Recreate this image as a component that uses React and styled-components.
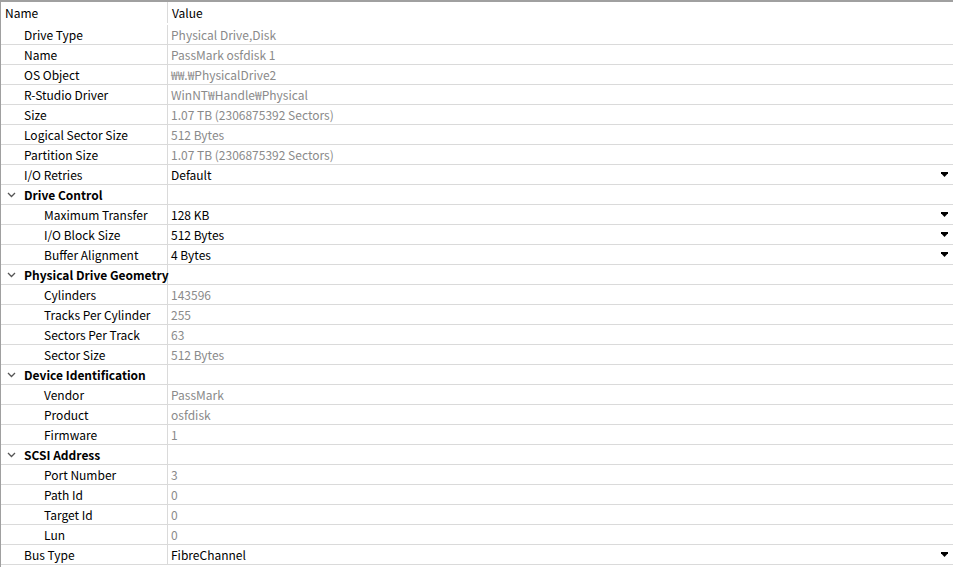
import styled, { createGlobalStyle } from 'styled-components';

const Global = createGlobalStyle`
    html, body {
        margin: 0;
        padding: 0;
        background: #fff;
        overflow: hidden;
    }
    body {
        font-family: "Noto Sans CJK KR", "Noto Sans", sans-serif;
        font-size: 12px;
    }
`;

const Grid = styled.div`
    width: 953px;
    height: 567px;
    box-sizing: border-box;
    border-top: 2px solid #a0a0a0;
    border-left: 1px solid #a0a0a0;
    background: #fff;
    overflow: hidden;
`;

const Row = styled.div`
    display: grid;
    grid-template-columns: 167px 1fr;
    height: ${(p) => (p.$header ? '23px' : '20px')};
    box-sizing: border-box;
    padding-bottom: ${(p) => (p.$header ? '2px' : '0')};
    border-bottom: ${(p) => (p.$header ? 'none' : '1px solid #dadada')};
`;

const NameCell = styled.div`
    display: flex;
    align-items: center;
    box-sizing: border-box;
    border-right: 1px solid #dadada;
    padding-left: ${(p) => p.$indent}px;
    color: #000;
    font-weight: ${(p) => (p.$group ? 700 : 400)};
    white-space: nowrap;
    overflow: visible;
    position: relative;
`;

const ValueCell = styled.div`
    display: flex;
    align-items: center;
    justify-content: space-between;
    padding-left: ${(p) => (p.$header ? 4 : 3)}px;
    padding-right: 5px;
    color: ${(p) => (p.$muted ? '#8a8a8a' : '#000')};
    white-space: nowrap;
`;

const Chevron = styled.svg`
    position: absolute;
    left: 6px;
    top: 7px;
`;

const Arrow = styled.svg`
    display: block;
`;

const rows = [
    { n: 'Drive Type', v: 'Physical Drive,Disk' },
    { n: 'Name', v: 'PassMark osfdisk 1' },
    { n: 'OS Object', v: '₩₩.₩PhysicalDrive2' },
    { n: 'R-Studio Driver', v: 'WinNT₩Handle₩Physical' },
    { n: 'Size', v: '1.07 TB (2306875392 Sectors)' },
    { n: 'Logical Sector Size', v: '512 Bytes' },
    { n: 'Partition Size', v: '1.07 TB (2306875392 Sectors)' },
    { n: 'I/O Retries', v: 'Default', edit: true },
    { n: 'Drive Control', group: true },
    { n: 'Maximum Transfer', v: '128 KB', edit: true, sub: true },
    { n: 'I/O Block Size', v: '512 Bytes', edit: true, sub: true },
    { n: 'Buffer Alignment', v: '4 Bytes', edit: true, sub: true },
    { n: 'Physical Drive Geometry', group: true },
    { n: 'Cylinders', v: '143596', sub: true },
    { n: 'Tracks Per Cylinder', v: '255', sub: true },
    { n: 'Sectors Per Track', v: '63', sub: true },
    { n: 'Sector Size', v: '512 Bytes', sub: true },
    { n: 'Device Identification', group: true },
    { n: 'Vendor', v: 'PassMark', sub: true },
    { n: 'Product', v: 'osfdisk', sub: true },
    { n: 'Firmware', v: '1', sub: true },
    { n: 'SCSI Address', group: true },
    { n: 'Port Number', v: '3', sub: true },
    { n: 'Path Id', v: '0', sub: true },
    { n: 'Target Id', v: '0', sub: true },
    { n: 'Lun', v: '0', sub: true },
    { n: 'Bus Type', v: 'FibreChannel', edit: true },
];

const DropArrow = () => (
    <Arrow width="7" height="5" viewBox="0 0 7 5">
        <path d="M0 0h7v1.2L3.5 5 0 1.2z" fill="#000" />
    </Arrow>
);

const App = () => {
    return (
        <>
            <Global />
            <Grid>
                <Row $header>
                    <NameCell $indent={4}>Name</NameCell>
                    <ValueCell $header>Value</ValueCell>
                </Row>
                {rows.map((r, i) => (
                    <Row key={i}>
                        <NameCell $indent={r.sub ? 43 : 23} $group={r.group}>
                            {r.group && (
                                <Chevron width="9" height="6" viewBox="0 0 9 6">
                                    <path d="M1 1l3.5 3.5L8 1" fill="none" stroke="#555" strokeWidth="1.3" />
                                </Chevron>
                            )}
                            {r.n}
                        </NameCell>
                        <ValueCell $muted={!r.edit}>
                            <span>{r.v}</span>
                            {r.edit && <DropArrow />}
                        </ValueCell>
                    </Row>
                ))}
            </Grid>
        </>
    );
};

export default App;
